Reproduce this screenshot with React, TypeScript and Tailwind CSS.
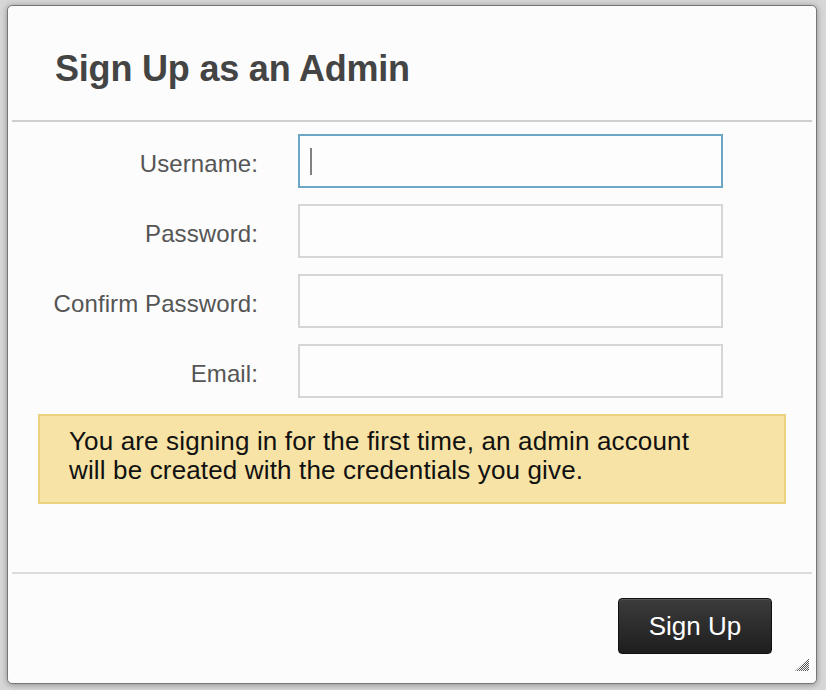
import React from 'react';

const FIELDS = [
  { label: 'Username:', type: 'text', focused: true },
  { label: 'Password:', type: 'password' },
  { label: 'Confirm Password:', type: 'password' },
  { label: 'Email:', type: 'email' },
];

export default function App() {
  return (
    <div
      className="h-[690px] w-[826px] overflow-hidden bg-[#d7d7d7] pl-[7px] pt-[5px]"
      style={{ fontFamily: '"Liberation Sans", Arial, sans-serif' }}
    >
      <div className="relative flex h-[679px] w-[810px] flex-col rounded-[5px] border border-[#767676] bg-[#fcfcfc] shadow-[0_1px_6px_rgba(0,0,0,0.35)]">
        {/* header */}
        <div className="mx-[4px] flex h-[116px] items-center border-b-2 border-[#cfcfcf] pl-[43px]">
          <h1 className="pt-[11px] text-[36px] font-bold tracking-[-0.2px] text-[#444]">
            Sign Up as an Admin
          </h1>
        </div>

        {/* body */}
        <div className="flex-1">
          <div className="mt-[12px] flex flex-col gap-[16px]">
            {FIELDS.map((f) => (
              <div key={f.label} className="flex items-center">
                <label className="w-[250px] pt-[5px] text-right text-[24px] tracking-[0.1px] text-[#555]">
                  {f.label}
                </label>
                <div
                  className={
                    f.focused
                      ? 'relative ml-[40px] h-[54px] w-[425px] border-2 border-[#6ea6c5] bg-[#fdfdfd]'
                      : 'ml-[40px] h-[54px] w-[425px] border-2 border-[#d6d6d6] bg-[#fdfdfd]'
                  }
                >
                  {f.focused && (
                    <span className="absolute left-[10px] top-[12px] h-[27px] w-[2px] bg-[#808080]" />
                  )}
                </div>
              </div>
            ))}
          </div>

          <div className="ml-[30px] mt-[16px] h-[90px] w-[748px] border-2 border-[#ecd27e] bg-[#f6e3a5] pl-[29px] pt-[11px] text-[26px] leading-[29px] tracking-[0.15px] text-[#111]">
            You are signing in for the first time, an admin account
            <br />
            will be created with the credentials you give.
          </div>
        </div>

        {/* footer */}
        <div className="mx-[4px] flex h-[111px] justify-end border-t-2 border-[#dcdcdc] pr-[40px] pt-[24px]">
          <button className="h-[56px] w-[154px] rounded-[4px] border border-[#111] bg-gradient-to-b from-[#3c3c3c] to-[#1e1e1e] text-[26px] text-white shadow-[inset_0_1px_0_rgba(255,255,255,0.15)]">
            Sign Up
          </button>
        </div>

        <svg className="absolute bottom-[12px] right-[7px]" width="14" height="13" viewBox="0 0 14 13">
          <defs>
            <pattern id="chk" width="2" height="2" patternUnits="userSpaceOnUse">
              <rect width="1" height="1" fill="#555" />
              <rect x="1" y="1" width="1" height="1" fill="#555" />
            </pattern>
          </defs>
          <polygon points="14,0 14,13 0,13" fill="url(#chk)" />
        </svg>
      </div>
    </div>
  );
}
